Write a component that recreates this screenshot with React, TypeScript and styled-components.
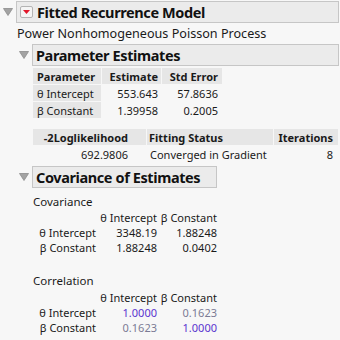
import styled, { createGlobalStyle } from "styled-components";

const GlobalStyle = createGlobalStyle`
  html, body {
    margin: 0;
    background: #f7f7f7;
  }
  body {
    font-family: "Noto Sans", "Open Sans", sans-serif;
    font-size: 11px;
    color: #1a1a1a;
  }
`;

const Page = styled.div`
  width: 340px;
  height: 340px;
  padding-top: 1px;
  box-sizing: border-box;
  overflow: hidden;
`;

const OutlineBox = styled.div`
  display: grid;
  grid-template-columns: 16px auto;
  width: fit-content;
`;

const Toggle = styled.div`
  display: flex;
  align-items: flex-start;
  padding: 7px 0 0 3px;
`;

const Body = styled.div`
  display: flex;
  flex-direction: column;
`;

const Header = styled.div`
  display: flex;
  align-items: center;
  gap: 4px;
  height: 20px;
  padding: 0 4px 0 3px;
  background: #ebebeb;
  border: 1px solid #c6c6c6;
  font-weight: 700;
  font-size: 14.5px;
  letter-spacing: -0.4px;
  color: #111;
  white-space: nowrap;
`;

const Content = styled.div`
  display: flex;
  flex-direction: column;
  align-items: flex-start;
  padding-left: 1px;
`;

const Note = styled.div<{ $top?: number; $size?: number }>`
  margin-top: ${(p) => p.$top ?? 0}px;
  line-height: 14px;
  font-size: ${(p) => p.$size ?? 11}px;
  white-space: nowrap;
`;

const Table = styled.table<{ $w: number; $top?: number; $bottom?: number }>`
  width: ${(p) => p.$w}px;
  border-collapse: separate;
  border-spacing: 1px;
  table-layout: fixed;
  margin: ${(p) => p.$top ?? 0}px 0 ${(p) => p.$bottom ?? 0}px -1px;
  line-height: 15px;
`;

const Col = styled.col<{ $w: number }>`
  width: ${(p) => p.$w}px;
`;

const Th = styled.th<{ $align?: string; $pl?: number; $pr?: number }>`
  background: #e6e6e6;
  font-weight: 700;
  text-align: ${(p) => p.$align ?? "right"};
  padding: 0 ${(p) => p.$pr ?? 4}px 0 ${(p) => p.$pl ?? 4}px;
  height: 16px;
  white-space: nowrap;
`;

const Td = styled.td<{ $label?: boolean; $align?: string; $pl?: number; $pr?: number }>`
  background: ${(p) => (p.$label ? "#e6e6e6" : "transparent")};
  text-align: ${(p) => p.$align ?? "right"};
  padding: 0 ${(p) => p.$pr ?? 4}px 0 ${(p) => p.$pl ?? 4}px;
  height: 16px;
  white-space: nowrap;
`;

const Matrix = styled.table<{ $top?: number }>`
  width: 184px;
  border-collapse: collapse;
  table-layout: fixed;
  margin-top: ${(p) => p.$top ?? 0}px;
  line-height: 15px;
`;

const MCell = styled.td<{ $tone?: "diag" | "off" }>`
  text-align: right;
  padding: 0;
  white-space: nowrap;
  color: ${(p) =>
    p.$tone === "diag" ? "#5a35cf" : p.$tone === "off" ? "#7b7b95" : "#1a1a1a"};
`;

const MLabel = styled.td`
  text-align: right;
  padding: 0 4px 0 0;
  white-space: nowrap;
`;

const Triangle = () => (
  <svg width="10" height="8" viewBox="0 0 10 8">
    <path d="M0.5 0.5 L9.5 0.5 L5 7.5 Z" fill="#a3a3a3" stroke="#8c8c8c" strokeWidth="0.8" />
  </svg>
);

const MenuIcon = () => (
  <svg width="13" height="12" viewBox="0 0 13 12">
    <rect x="0.5" y="0.5" width="12" height="11" rx="1.5" fill="#f5f5f5" stroke="#b4b4b4" />
    <path d="M3 4 L10 4 L6.5 8 Z" fill="#e2182b" />
  </svg>
);

type OutlineProps = {
  title: string;
  menu?: boolean;
  children?: React.ReactNode;
};

const Outline = ({ title, menu, children }: OutlineProps) => (
  <OutlineBox>
    <Toggle>
      <Triangle />
    </Toggle>
    <Body>
      <Header>
        {menu && <MenuIcon />}
        {title}
      </Header>
      {children}
    </Body>
  </OutlineBox>
);

const Gap = styled.div<{ $h: number }>`
  height: ${(p) => p.$h}px;
`;

const cov = [
  ["θ Intercept", "3348.19", "1.88248"],
  ["β Constant", "1.88248", "0.0402"],
];

const corr = [
  ["θ Intercept", "1.0000", "0.1623"],
  ["β Constant", "0.1623", "1.0000"],
];

const MatrixBlock = ({
  rows,
  tinted,
  top,
}: {
  rows: string[][];
  tinted?: boolean;
  top?: number;
}) => (
  <Matrix $top={top}>
    <colgroup>
      <Col $w={67} />
      <Col $w={57} />
      <Col $w={60} />
    </colgroup>
    <tbody>
      <tr>
        <MCell />
        <MCell>θ Intercept</MCell>
        <MCell>β Constant</MCell>
      </tr>
      {rows.map((r, i) => (
        <tr key={r[0]}>
          <MLabel>{r[0]}</MLabel>
          {r.slice(1).map((v, j) => (
            <MCell key={j} $tone={tinted ? (i === j ? "diag" : "off") : undefined}>
              {v}
            </MCell>
          ))}
        </tr>
      ))}
    </tbody>
  </Matrix>
);

export default function App() {
  return (
    <Page>
      <GlobalStyle />
      <Outline title="Fitted Recurrence Model" menu>
        <Content>
          <Note $top={4} $size={12.6}>
            Power Nonhomogeneous Poisson Process
          </Note>
        </Content>
        <Gap $h={3} />
        <Outline title="Parameter Estimates">
          <Content>
            <Table $w={191} $top={1}>
              <colgroup>
                <Col $w={68} />
                <Col $w={59} />
                <Col $w={60} />
              </colgroup>
              <thead>
                <tr>
                  <Th $align="left">Parameter</Th>
                  <Th $pr={3}>Estimate</Th>
                  <Th>Std Error</Th>
                </tr>
              </thead>
              <tbody>
                <tr>
                  <Td $label $align="left">θ Intercept</Td>
                  <Td $pr={3}>553.643</Td>
                  <Td>57.8636</Td>
                </tr>
                <tr>
                  <Td $label $align="left">β Constant</Td>
                  <Td $pr={3}>1.39958</Td>
                  <Td>0.2005</Td>
                </tr>
              </tbody>
            </Table>
            <Table $w={307} $top={9} $bottom={3}>
              <colgroup>
                <Col $w={113} />
                <Col $w={126} />
                <Col $w={64} />
              </colgroup>
              <thead>
                <tr>
                  <Th $pr={18}>-2Loglikelihood</Th>
                  <Th $align="left" $pl={2}>Fitting Status</Th>
                  <Th $pr={5}>Iterations</Th>
                </tr>
              </thead>
              <tbody>
                <tr>
                  <Td $pr={18}>692.9806</Td>
                  <Td $align="left" $pl={3}>Converged in Gradient</Td>
                  <Td $pr={5}>8</Td>
                </tr>
              </tbody>
            </Table>
          </Content>
        </Outline>
        <Outline title="Covariance of Estimates">
          <Content>
            <Note $top={7} $size={11.5}>Covariance</Note>
            <MatrixBlock rows={cov} top={1} />
            <Note $top={19} $size={11.5}>Correlation</Note>
            <MatrixBlock rows={corr} tinted top={2} />
          </Content>
        </Outline>
      </Outline>
    </Page>
  );
}
